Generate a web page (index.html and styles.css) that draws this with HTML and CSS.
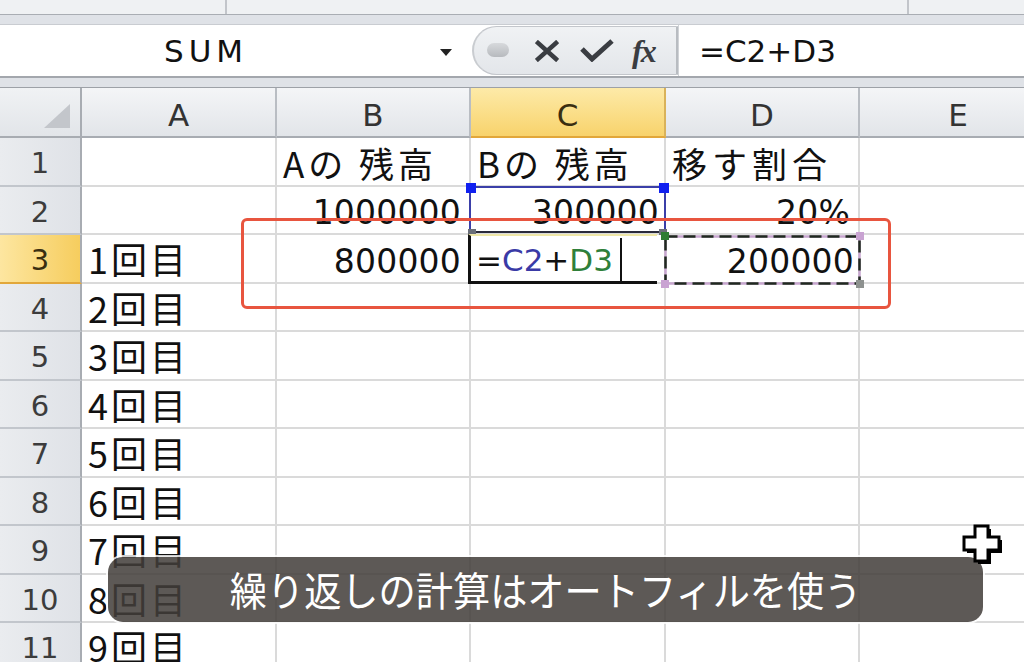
FILE: index.html
```html
<!DOCTYPE html>
<html lang="ja">
<head>
<meta charset="utf-8">
<title>Excel</title>
<link rel="stylesheet" href="styles.css">
</head>
<body>
<div class="top">
  <div class="seg seg1"></div>
  <div class="seg seg2"></div>
  <div class="seg seg3"></div>
</div>
<div class="fwrap">
  <div class="fbar">
    <div class="namebox"><span class="nametext">SUM</span><span class="arrow"></span></div>
    <div class="btns">
      <span class="pill"></span>
      <svg class="ico ico-x" width="24" height="22" viewBox="0 0 24 22"><path d="M3 3 L21 19 M21 3 L3 19" stroke="#3a3d42" stroke-width="4.5" stroke-linecap="square" fill="none"/></svg>
      <svg class="ico ico-ok" width="34" height="24" viewBox="0 0 34 24"><path d="M2 11 L12 21 L32 3" stroke="#3a3d42" stroke-width="5" fill="none" stroke-linejoin="miter"/></svg>
      <span class="fx">fx</span>
    </div>
    <div class="formula">=C2+D3</div>
  </div>
</div>
<div class="sheet">
  <div class="h corner"><span class="tri"></span></div>
  <div class="h col">A</div>
  <div class="h col">B</div>
  <div class="h col sel">C</div>
  <div class="h col">D</div>
  <div class="h col last">E</div>

  <div class="h row">1</div>
  <div class="c"></div>
  <div class="c jp head">Aの 残高</div>
  <div class="c jp head">Bの 残高</div>
  <div class="c jp wide">移す割合</div>
  <div class="c"></div>

  <div class="h row">2</div>
  <div class="c"></div>
  <div class="c num">1000000</div>
  <div class="c num pr5">300000</div>
  <div class="c num">20%</div>
  <div class="c"></div>

  <div class="h row sel">3</div>
  <div class="c jp cnt">1回目</div>
  <div class="c num">800000</div>
  <div class="c"></div>
  <div class="c num pr4">200000</div>
  <div class="c"></div>

  <div class="h row">4</div><div class="c jp cnt">2回目</div><div class="c"></div><div class="c"></div><div class="c"></div><div class="c"></div>
  <div class="h row">5</div><div class="c jp cnt">3回目</div><div class="c"></div><div class="c"></div><div class="c"></div><div class="c"></div>
  <div class="h row">6</div><div class="c jp cnt">4回目</div><div class="c"></div><div class="c"></div><div class="c"></div><div class="c"></div>
  <div class="h row">7</div><div class="c jp cnt">5回目</div><div class="c"></div><div class="c"></div><div class="c"></div><div class="c"></div>
  <div class="h row">8</div><div class="c jp cnt">6回目</div><div class="c"></div><div class="c"></div><div class="c"></div><div class="c"></div>
  <div class="h row">9</div><div class="c jp cnt">7回目</div><div class="c"></div><div class="c"></div><div class="c"></div><div class="c"></div>
  <div class="h row">10</div><div class="c jp cnt">8回目</div><div class="c"></div><div class="c"></div><div class="c"></div><div class="c"></div>
  <div class="h row">11</div><div class="c jp cnt">9回目</div><div class="c"></div><div class="c"></div><div class="c"></div><div class="c"></div>

  <!-- overlays -->
  <div class="refbox">
    <span class="sq sq-tl"></span><span class="sq sq-tr"></span>
    <span class="gq gq-bl"></span><span class="gq gq-br"></span>
  </div>
  <div class="active"><span class="ftext">=<span class="rc">C2</span>+<span class="rd">D3</span></span><span class="caret"></span></div>
  <div class="marquee">
    <svg class="dash" width="197" height="50" viewBox="0 0 197 50">
      <rect x="1.5" y="1.5" width="194" height="47" fill="none" stroke="#c7a6cf" stroke-width="2.5"/>
      <rect x="1.5" y="1.5" width="194" height="47" fill="none" stroke="#1f2a1f" stroke-width="2.5" stroke-dasharray="12 6"/>
    </svg>
    <span class="mq mq-tl"></span><span class="mq mq-tr"></span><span class="mq mq-bl"></span><span class="mq mq-br"></span>
  </div>
  <div class="redbox"></div>
  <div class="caption"><span class="captext">繰り返しの計算はオートフィルを使う</span></div>
  <svg class="cursor" width="44" height="44" viewBox="0 0 44 44">
    <path d="M16 6 H29 V17 H40 V30 H29 V41 H16 V30 H5 V17 H16 Z" fill="#000"/>
    <path d="M13 3 H26 V14 H37 V27 H26 V38 H13 V27 H2 V14 H13 Z" fill="#fff" stroke="#000" stroke-width="3"/>
  </svg>
</div>
</body>
</html>
```

FILE: styles.css
```css
html, body {
  margin: 0;
  padding: 0;
}
body {
  width: 1024px;
  height: 662px;
  overflow: hidden;
  background: #dfe2e7;
  font-family: "DejaVu Sans", "Noto Sans CJK JP", sans-serif;
}

/* top strip */
.top {
  height: 14px;
  display: flex;
  background: #eff1f3;
  border-bottom: 1px solid #a9adb3;
}
.seg { height: 100%; }
.seg1 { width: 225px; border-right: 2px solid #c2c5ca; }
.seg2 { width: 680px; border-right: 2px solid #c2c5ca; }
.seg3 { flex: 1; }

/* formula bar */
.fwrap {
  padding: 9px 0 9px;
}
.fbar {
  height: 51px;
  display: flex;
  background: #fff;
  border-top: 1px solid #c9ccd1;
  border-bottom: 2px solid #a3a7ad;
}
.namebox {
  width: 472px;
  position: relative;
}
.nametext {
  position: absolute;
  left: 164px;
  top: 8px;
  font-size: 31px;
  letter-spacing: 5px;
  color: #111;
}
.arrow {
  position: absolute;
  left: 440px;
  top: 24px;
  width: 0;
  height: 0;
  border-left: 6px solid transparent;
  border-right: 6px solid transparent;
  border-top: 7px solid #222;
}
.btns {
  width: 206px;
  margin: 1px 0;
  box-sizing: border-box;
  background: linear-gradient(#f0f2f4, #e3e6ea);
  border: 1px solid #c3c6cb;
  border-left: 2px solid #c9ccd0;
  border-right: 2px solid #b8bcc1;
  border-radius: 25px 0 0 25px;
  position: relative;
}
.pill {
  position: absolute;
  left: 13px;
  top: 16px;
  width: 22px;
  height: 14px;
  border-radius: 7px;
  background: linear-gradient(#d7d9dc, #b7babe);
}
.ico { position: absolute; }
.ico-x { left: 61px; top: 13px; }
.ico-ok { left: 106px; top: 11px; }
.fx {
  position: absolute;
  left: 158px;
  top: 6px;
  font-family: "Liberation Serif", serif;
  font-size: 32px;
  font-style: italic;
  font-weight: bold;
  letter-spacing: -2px;
  color: #3a3d42;
}
.formula {
  flex: 1;
  padding-left: 20px;
  padding-top: 8px;
  font-size: 31px;
  color: #111;
  border-left: 1px solid #d0d3d7;
}

/* sheet */
.sheet {
  position: relative;
  width: 1056px;
  display: grid;
  grid-template-columns: 82px 195px 194px 195px 194px 196px;
  grid-template-rows: 50px repeat(11, 48.5px);
  background: #fff;
  border-top: 1px solid #9da1a7;
}
.h {
  box-sizing: border-box;
  display: flex;
  align-items: center;
  justify-content: center;
  color: #333;
}
.col {
  background: linear-gradient(#f4f5f7, #e2e5e9);
  border-right: 2px solid #b9bdc3;
  border-bottom: 2px solid #a8acb2;
  font-size: 31px;
  padding-top: 6px;
}
.col.last { border-right: none; }
.col.sel {
  background: linear-gradient(#fdeaa8, #f8d36c);
  border-bottom: 2px solid #e2a73a;
  border-right: 2px solid #d9b25a;
  color: #3a2e10;
}
.corner {
  background: linear-gradient(#f0f2f4, #e2e5e9);
  border-right: 2px solid #a8acb2;
  border-bottom: 2px solid #a8acb2;
  position: relative;
}
.tri {
  position: absolute;
  right: 10px;
  bottom: 8px;
  width: 0;
  height: 0;
  border-left: 26px solid transparent;
  border-bottom: 24px solid #c3c6cb;
}
.row {
  background: linear-gradient(90deg, #eaecef, #dfe2e7);
  border-right: 2px solid #a8acb2;
  border-bottom: 2px solid #c2c6cc;
  font-size: 29px;
  padding-top: 4px;
  color: #3c3c3c;
}
.row.sel {
  background: linear-gradient(90deg, #fde6a0, #f6cd5e);
  border-bottom: 2px solid #e2a73a;
  color: #3a2e10;
}
.c {
  box-sizing: border-box;
  border-right: 2px solid #dadada;
  border-bottom: 2px solid #dadada;
  display: flex;
  align-items: center;
  overflow: visible;
  white-space: nowrap;
  color: #111;
}
.jp {
  font-family: "Noto Sans CJK JP", sans-serif;
  font-size: 35px;
  padding-left: 6px;
  padding-top: 2px;
}
.head { letter-spacing: 4px; }
.wide { letter-spacing: 5px; }
.cnt { letter-spacing: 3px; font-size: 36px; padding-top: 0; }
.num {
  justify-content: flex-end;
  font-size: 33px;
  padding-right: 8px;
  padding-top: 6px;
  letter-spacing: 0.2px;
}
.pr5 { padding-right: 5px; }
.pr4 { padding-right: 4px; }

/* overlays */
.refbox {
  position: absolute;
  left: 469px;
  top: 98px;
  width: 197px;
  height: 47px;
  box-sizing: border-box;
  border: 2px solid #3b3fa8;
  border-bottom-color: #2a2a3a;
}
.sq {
  position: absolute;
  width: 10px;
  height: 10px;
  background: #1020f0;
  top: -5px;
}
.sq-tl { left: -5px; }
.sq-tr { right: -5px; }
.gq {
  position: absolute;
  width: 8px;
  height: 6px;
  background: #6a6e78;
  bottom: -4px;
}
.gq-bl { left: -3px; }
.gq-br { right: -3px; }

.active {
  position: absolute;
  left: 468px;
  top: 146px;
  width: 189px;
  height: 50px;
  box-sizing: border-box;
  border-left: 3px solid #111;
  border-bottom: 3px solid #111;
  border-top: 2px solid #efe7a8;
  background: #fff;
}
.ftext {
  position: absolute;
  left: 5px;
  top: 6px;
  font-size: 31px;
  color: #111;
}
.rc { color: #3a3aa6; }
.rd { color: #2f7f3a; }
.caret {
  position: absolute;
  left: 149px;
  top: 2px;
  width: 2px;
  height: 44px;
  background: #111;
}
.marquee {
  position: absolute;
  left: 664px;
  top: 147px;
  width: 197px;
  height: 50px;
}
.dash { position: absolute; left: 0; top: 0; }
.mq {
  position: absolute;
  width: 8px;
  height: 8px;
}
.mq-tl { left: -3px; top: -3px; background: #2e7d32; }
.mq-tr { right: -3px; top: -3px; background: #c9a3d2; }
.mq-bl { left: -3px; bottom: -3px; background: #c9a3d2; }
.mq-br { right: -3px; bottom: -3px; background: #8d918f; }

.redbox {
  position: absolute;
  left: 241px;
  top: 130px;
  width: 650px;
  height: 91px;
  box-sizing: border-box;
  border: 3px solid #e8553f;
  border-radius: 6px;
}
.caption {
  position: absolute;
  left: 108px;
  top: 469px;
  width: 875px;
  height: 65px;
  border-radius: 15px;
  background: rgba(66, 62, 58, 0.86);
  box-shadow: 0 0 0 2px rgba(255, 255, 255, 0.8);
  display: flex;
  align-items: center;
  justify-content: center;
}
.captext {
  display: inline-block;
  font-family: "Noto Sans CJK JP", sans-serif;
  font-size: 40px;
  color: #fff;
  white-space: nowrap;
  transform: scaleX(0.93);
  margin-top: -2px;
}
.cursor {
  position: absolute;
  left: 962px;
  top: 435px;
}
```
